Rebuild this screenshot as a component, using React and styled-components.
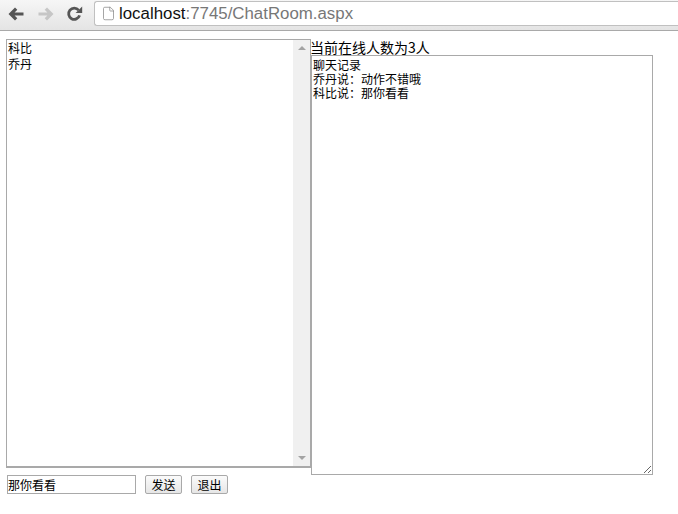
import React from "react";
import styled, { createGlobalStyle } from "styled-components";
import { File } from "lucide-react";

const GlobalStyle = createGlobalStyle`
  html, body {
    margin: 0;
    background: #ffffff;
  }
  body {
    font-family: "Noto Sans CJK SC", "Liberation Sans", sans-serif;
    color: #000;
  }
`;

const Page = styled.div`
  width: 678px;
  height: 514px;
  overflow: hidden;
`;

const Toolbar = styled.div`
  height: 31px;
  box-sizing: border-box;
  display: flex;
  align-items: flex-start;
  padding: 1px 0 0 7px;
  background: linear-gradient(#f6f6f6, #e4e4e4);
  border-bottom: 1px solid #a9a9a9;
`;

const NavButton = styled.div`
  width: ${(p) => p.$w}px;
  height: 25px;
  display: flex;
  align-items: center;
`;

const AddressBar = styled.div`
  flex: 1;
  height: 25px;
  box-sizing: border-box;
  margin-left: 1px;
  display: flex;
  align-items: center;
  gap: 3px;
  padding-left: 6px;
  background: #fff;
  border: 1px solid #c0c0c0;
  border-right: none;
  border-radius: 3px 0 0 3px;
  font-family: "Liberation Sans", sans-serif;
  font-size: 16.85px;
  color: #777;
`;

const Host = styled.span`
  color: #111;
`;

const Content = styled.div`
  padding: 8px 0 0 6px;
`;

const Columns = styled.div`
  display: flex;
  align-items: flex-start;
`;

const ListBox = styled.div`
  width: 305px;
  height: 429px;
  box-sizing: border-box;
  display: flex;
  border: 1px solid #a9a9a9;
  border-bottom-width: 2px;
`;

const Items = styled.div`
  flex: 1;
  padding: 0 0 0 1px;
`;

const Item = styled.div`
  height: 16px;
  font-size: 12px;
  line-height: 16px;
`;

const ScrollBar = styled.div`
  width: 17px;
  display: flex;
  flex-direction: column;
  justify-content: space-between;
  align-items: center;
  padding: 6px 0;
  background: #f0f0f0;
`;

const ScrollArrow = styled.div`
  width: 0;
  height: 0;
  border-left: 4px solid transparent;
  border-right: 4px solid transparent;
  ${(p) => (p.$down ? "border-top" : "border-bottom")}: 4px solid #a3a3a3;
`;

const ChatColumn = styled.div`
  display: flex;
  flex-direction: column;
  margin-left: -1px;
`;

const OnlineCount = styled.div`
  height: 16px;
  font-size: 14px;
  line-height: 17px;
  white-space: nowrap;
`;

const ChatLog = styled.textarea`
  width: 342px;
  height: 420px;
  box-sizing: border-box;
  margin: 0 0 0 1px;
  padding: 2px 1px;
  display: block;
  border: 1px solid #a9a9a9;
  border-radius: 0;
  outline: none;
  font-family: "Noto Sans CJK SC", "Liberation Sans", sans-serif;
  font-size: 12px;
  line-height: 14px;
  color: #000;
`;

const SendBar = styled.div`
  padding-left: 1px;
  display: flex;
  align-items: flex-start;
`;

const MessageInput = styled.input`
  width: 129px;
  height: 19px;
  box-sizing: border-box;
  margin: 0 9px 0 0;
  padding: 0;
  border: 1px solid #a9a9a9;
  border-radius: 0;
  outline: none;
  font-family: "Noto Sans CJK SC", "Liberation Sans", sans-serif;
  font-size: 12px;
  color: #000;
`;

const ActionButton = styled.button`
  width: 37px;
  height: 19px;
  box-sizing: border-box;
  margin-right: 9px;
  padding: 0;
  background: linear-gradient(#fbfbfb, #e6e6e6);
  border: 1px solid #a9a9a9;
  border-radius: 2px;
  font-family: "Noto Sans CJK SC", "Liberation Sans", sans-serif;
  font-size: 12px;
  line-height: 16px;
  color: #000;
`;

const BackIcon = ({ color }) => (
  <svg width="18" height="16" viewBox="0 0 18 16" fill={color}>
    <path d="M8 1.5 L10.3 3.8 L7.6 6.4 H16.5 V9.6 H7.6 L10.3 12.2 L8 14.5 L1.5 8 Z" />
  </svg>
);

const ForwardIcon = ({ color }) => (
  <svg width="18" height="16" viewBox="0 0 18 16" fill={color}>
    <path d="M10 1.5 L7.7 3.8 L10.4 6.4 H1.5 V9.6 H10.4 L7.7 12.2 L10 14.5 L16.5 8 Z" />
  </svg>
);

const ReloadIcon = ({ color }) => (
  <svg width="17" height="17" viewBox="0 0 17 17" fill="none">
    <path
      d="M12.6 5.2 A5.6 5.6 0 1 0 13.6 10.4"
      stroke={color}
      strokeWidth="2.8"
    />
    <path d="M16.2 1.4 V8 H9.6 Z" fill={color} />
  </svg>
);

export default function App() {
  return (
    <Page>
      <GlobalStyle />
      <Toolbar>
        <NavButton $w={30}>
          <BackIcon color="#555" />
        </NavButton>
        <NavButton $w={29}>
          <ForwardIcon color="#c6c6c6" />
        </NavButton>
        <NavButton $w={27}>
          <ReloadIcon color="#555" />
        </NavButton>
        <AddressBar>
          <File size={15} strokeWidth={1.2} color="#888" />
          <span>
            <Host>localhost</Host>:7745/ChatRoom.aspx
          </span>
        </AddressBar>
      </Toolbar>
      <Content>
        <Columns>
          <ListBox>
            <Items>
              <Item>科比</Item>
              <Item>乔丹</Item>
            </Items>
            <ScrollBar>
              <ScrollArrow />
              <ScrollArrow $down />
            </ScrollBar>
          </ListBox>
          <ChatColumn>
            <OnlineCount>当前在线人数为3人</OnlineCount>
            <ChatLog
              readOnly
              defaultValue={"聊天记录\n乔丹说：动作不错哦\n科比说：那你看看"}
            />
          </ChatColumn>
        </Columns>
        <SendBar>
          <MessageInput readOnly value="那你看看" />
          <ActionButton>发送</ActionButton>
          <ActionButton>退出</ActionButton>
        </SendBar>
      </Content>
    </Page>
  );
}
